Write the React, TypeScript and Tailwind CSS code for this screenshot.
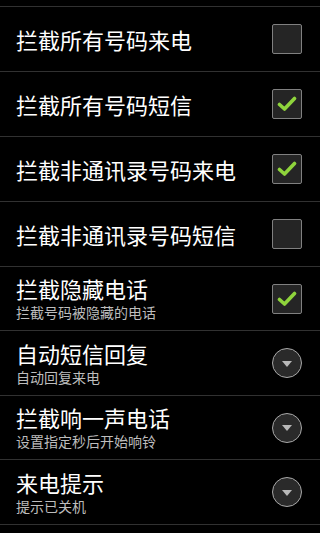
import React from "react";

type Row = {
  title: string;
  sub?: string;
  kind: "check" | "uncheck" | "drop";
  h: string;
};

const rows: Row[] = [
  { title: "拦截所有号码来电", kind: "uncheck", h: "h-[64px]" },
  { title: "拦截所有号码短信", kind: "check", h: "h-[64px]" },
  { title: "拦截非通讯录号码来电", kind: "check", h: "h-[64px]" },
  { title: "拦截非通讯录号码短信", kind: "uncheck", h: "h-[64px]" },
  { title: "拦截隐藏电话", sub: "拦截号码被隐藏的电话", kind: "check", h: "h-[63px]" },
  { title: "自动短信回复", sub: "自动回复来电", kind: "drop", h: "h-[64px]" },
  { title: "拦截响一声电话", sub: "设置指定秒后开始响铃", kind: "drop", h: "h-[63px]" },
  { title: "来电提示", sub: "提示已关机", kind: "drop", h: "h-[64px]" },
];

function CheckBox({ checked }: { checked: boolean }) {
  return (
    <div className="w-[30px] h-[30px] rounded-[2px] border-[1.5px] border-[#808080] bg-[#252525] flex items-center justify-center">
      {checked && (
        <svg width="20" height="16" viewBox="0 0 20 16">
          <path
            d="M2.5 8.5 L7.5 13 L17.5 2.5"
            fill="none"
            stroke="#8fd43c"
            strokeWidth="3.6"
            strokeLinecap="round"
            strokeLinejoin="round"
          />
        </svg>
      )}
    </div>
  );
}

function Drop() {
  return (
    <div className="w-[30px] h-[30px] rounded-full border-[1.5px] border-[#a8a8a8] bg-[#2a2a2a] flex items-center justify-center">
      <svg width="10" height="6" viewBox="0 0 10 6" className="mt-[1px]">
        <path d="M0 0 L10 0 L5 6 Z" fill="#b8b8b8" />
      </svg>
    </div>
  );
}

export default function App() {
  return (
    <div
      className="w-[320px] h-[533px] bg-black overflow-hidden flex flex-col"
      style={{ fontFamily: '"Noto Sans CJK SC", "Noto Sans", sans-serif' }}
    >
      <div className="h-[6px] shrink-0" />
      <div className="h-[1px] bg-[#313131] shrink-0" />
      {rows.map((r, i) => (
        <React.Fragment key={i}>
          <div className={`${r.h} shrink-0 flex items-center pl-[16px] pr-[18px]`}>
            <div className="flex-1 flex flex-col">
              <div className="text-white text-[22px] leading-[22px]">{r.title}</div>
              {r.sub && (
                <div className="text-[#bdbdbd] text-[14px] leading-[15px] mt-[6px]">{r.sub}</div>
              )}
            </div>
            {r.kind === "drop" ? <Drop /> : <CheckBox checked={r.kind === "check"} />}
          </div>
          <div className="h-[1px] bg-[#313131] shrink-0" />
        </React.Fragment>
      ))}
    </div>
  );
}
